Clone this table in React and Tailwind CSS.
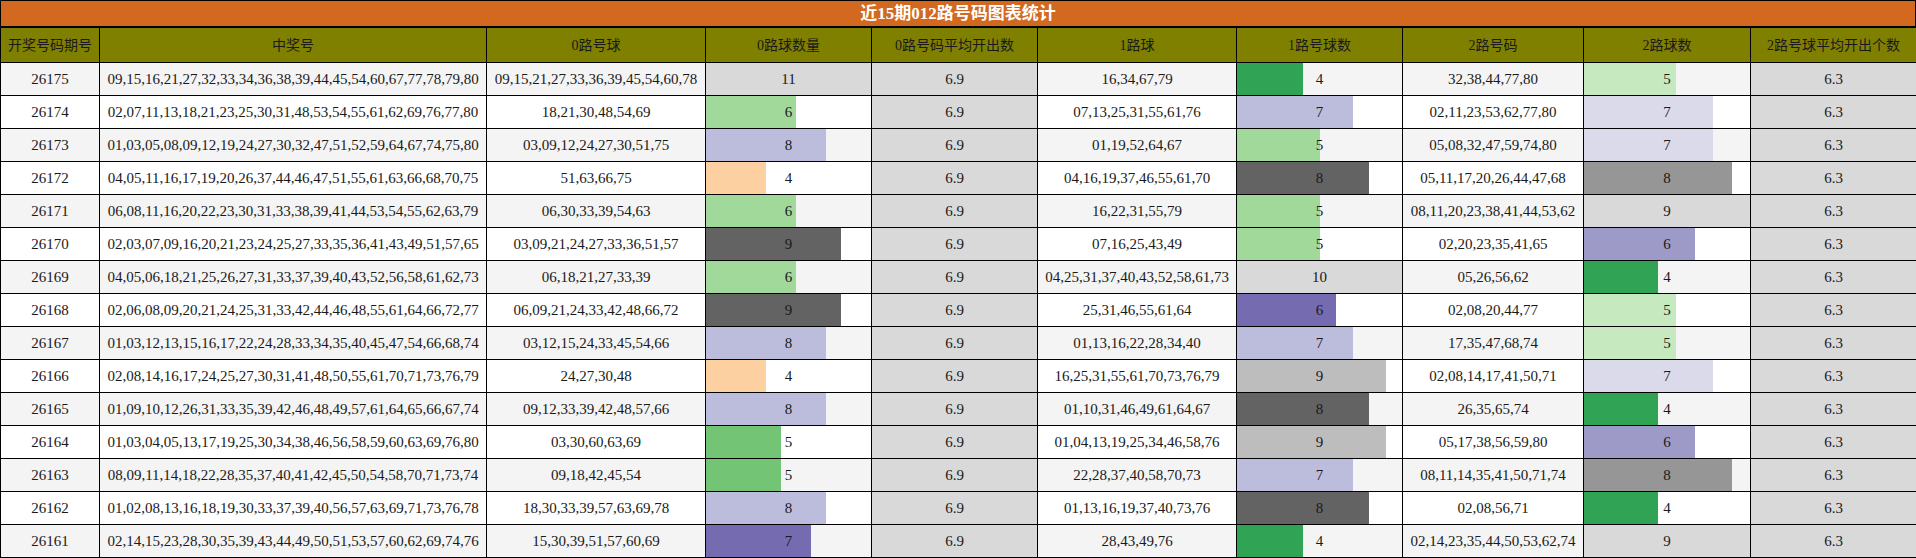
import React from 'react';

const rows = [
  ['26175', '09,15,16,21,27,32,33,34,36,38,39,44,45,54,60,67,77,78,79,80', '09,15,21,27,33,36,39,45,54,60,78', 11, '16,34,67,79', 4, '32,38,44,77,80', 5],
  ['26174', '02,07,11,13,18,21,23,25,30,31,48,53,54,55,61,62,69,76,77,80', '18,21,30,48,54,69', 6, '07,13,25,31,55,61,76', 7, '02,11,23,53,62,77,80', 7],
  ['26173', '01,03,05,08,09,12,19,24,27,30,32,47,51,52,59,64,67,74,75,80', '03,09,12,24,27,30,51,75', 8, '01,19,52,64,67', 5, '05,08,32,47,59,74,80', 7],
  ['26172', '04,05,11,16,17,19,20,26,37,44,46,47,51,55,61,63,66,68,70,75', '51,63,66,75', 4, '04,16,19,37,46,55,61,70', 8, '05,11,17,20,26,44,47,68', 8],
  ['26171', '06,08,11,16,20,22,23,30,31,33,38,39,41,44,53,54,55,62,63,79', '06,30,33,39,54,63', 6, '16,22,31,55,79', 5, '08,11,20,23,38,41,44,53,62', 9],
  ['26170', '02,03,07,09,16,20,21,23,24,25,27,33,35,36,41,43,49,51,57,65', '03,09,21,24,27,33,36,51,57', 9, '07,16,25,43,49', 5, '02,20,23,35,41,65', 6],
  ['26169', '04,05,06,18,21,25,26,27,31,33,37,39,40,43,52,56,58,61,62,73', '06,18,21,27,33,39', 6, '04,25,31,37,40,43,52,58,61,73', 10, '05,26,56,62', 4],
  ['26168', '02,06,08,09,20,21,24,25,31,33,42,44,46,48,55,61,64,66,72,77', '06,09,21,24,33,42,48,66,72', 9, '25,31,46,55,61,64', 6, '02,08,20,44,77', 5],
  ['26167', '01,03,12,13,15,16,17,22,24,28,33,34,35,40,45,47,54,66,68,74', '03,12,15,24,33,45,54,66', 8, '01,13,16,22,28,34,40', 7, '17,35,47,68,74', 5],
  ['26166', '02,08,14,16,17,24,25,27,30,31,41,48,50,55,61,70,71,73,76,79', '24,27,30,48', 4, '16,25,31,55,61,70,73,76,79', 9, '02,08,14,17,41,50,71', 7],
  ['26165', '01,09,10,12,26,31,33,35,39,42,46,48,49,57,61,64,65,66,67,74', '09,12,33,39,42,48,57,66', 8, '01,10,31,46,49,61,64,67', 8, '26,35,65,74', 4],
  ['26164', '01,03,04,05,13,17,19,25,30,34,38,46,56,58,59,60,63,69,76,80', '03,30,60,63,69', 5, '01,04,13,19,25,34,46,58,76', 9, '05,17,38,56,59,80', 6],
  ['26163', '08,09,11,14,18,22,28,35,37,40,41,42,45,50,54,58,70,71,73,74', '09,18,42,45,54', 5, '22,28,37,40,58,70,73', 7, '08,11,14,35,41,50,71,74', 8],
  ['26162', '01,02,08,13,16,18,19,30,33,37,39,40,56,57,63,69,71,73,76,78', '18,30,33,39,57,63,69,78', 8, '01,13,16,19,37,40,73,76', 8, '02,08,56,71', 4],
  ['26161', '02,14,15,23,28,30,35,39,43,44,49,50,51,53,57,60,62,69,74,76', '15,30,39,51,57,60,69', 7, '28,43,49,76', 4, '02,14,23,35,44,50,53,62,74', 9],
];

// colour scales per count column (category20c, as in the chart)
const zeroColors = { 11: '#d9d9d9', 9: '#636363', 8: '#bcbddc', 7: '#756bb1', 6: '#a1d99b', 5: '#74c476', 4: '#fdd0a2' };
const oneColors = { 10: '#d9d9d9', 9: '#bdbdbd', 8: '#636363', 7: '#bcbddc', 6: '#756bb1', 5: '#a1d99b', 4: '#31a354' };
const twoColors = { 9: '#d9d9d9', 8: '#969696', 7: '#dadaeb', 6: '#9e9ac8', 5: '#c7e9c0', 4: '#31a354' };

const headers = ['开奖号码期号', '中奖号', '0路号球', '0路球数量', '0路号码平均开出数', '1路球', '1路号球数', '2路号码', '2路球数', '2路号球平均开出个数'];
const widths = [99, 387, 219, 166, 166, 199, 166, 181, 167, 166];

function BarCell({ value, max, colors }) {
  return (
    <td className="relative border border-black p-0">
      <div className="absolute left-0 top-0 bottom-0" style={{ width: `${(value / max) * 100}%`, background: colors[value] }} />
      <span className="relative">{value}</span>
    </td>
  );
}

export default function App() {
  return (
    <div className="w-[1916px] bg-white font-['Liberation_Serif','Noto_Sans_CJK_SC',serif] text-[#1a1a1a]">
      <div className="h-[27px] border border-black bg-[#d2691e] text-center text-[17px] leading-[25px] font-bold text-white">
        近15期012路号码图表统计
      </div>
      <table className="w-full table-fixed border-collapse text-center text-[15px]">
        <colgroup>
          {widths.map((w, i) => <col key={i} style={{ width: w }} />)}
        </colgroup>
        <thead>
          <tr className="h-[35px] bg-[#808000] text-[14px]">
            {headers.map((h) => (
              <th key={h} className="border border-black p-0 font-normal whitespace-nowrap">{h}</th>
            ))}
          </tr>
        </thead>
        <tbody>
          {rows.map((r, i) => (
            <tr key={r[0]} className={i % 2 === 0 ? 'h-[33px] bg-[#f4f4f4]' : 'h-[33px] bg-white'}>
              <td className="border border-black p-0">{r[0]}</td>
              <td className="border border-black p-0">{r[1]}</td>
              <td className="border border-black p-0">{r[2]}</td>
              <BarCell value={r[3]} max={11} colors={zeroColors} />
              <td className="border border-black bg-[#d9d9d9] p-0">6.9</td>
              <td className="border border-black p-0">{r[4]}</td>
              <BarCell value={r[5]} max={10} colors={oneColors} />
              <td className="border border-black p-0">{r[6]}</td>
              <BarCell value={r[7]} max={9} colors={twoColors} />
              <td className="border border-black bg-[#d9d9d9] p-0">6.3</td>
            </tr>
          ))}
        </tbody>
      </table>
    </div>
  );
}
